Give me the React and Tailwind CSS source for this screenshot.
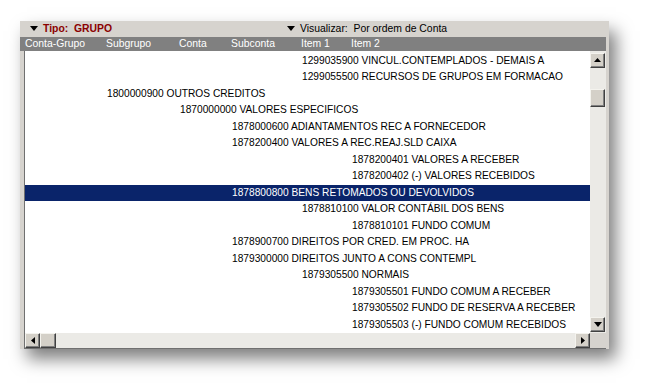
import React from "react";

const rows = [
  [302, "1299035900 VINCUL.CONTEMPLADOS - DEMAIS A"],
  [302, "1299055500 RECURSOS DE GRUPOS EM FORMACAO"],
  [107, "1800000900 OUTROS CREDITOS"],
  [180, "1870000000 VALORES ESPECIFICOS"],
  [232, "1878000600 ADIANTAMENTOS REC A FORNECEDOR"],
  [232, "1878200400 VALORES A REC.REAJ.SLD CAIXA"],
  [352, "1878200401 VALORES A RECEBER"],
  [352, "1878200402 (-) VALORES RECEBIDOS"],
  [232, "1878800800 BENS RETOMADOS OU DEVOLVIDOS", true],
  [302, "1878810100 VALOR CONTÁBIL DOS BENS"],
  [352, "1878810101 FUNDO COMUM"],
  [232, "1878900700 DIREITOS POR CRED. EM PROC. HA"],
  [232, "1879300000 DIREITOS JUNTO A CONS CONTEMPL"],
  [302, "1879305500 NORMAIS"],
  [352, "1879305501 FUNDO COMUM A RECEBER"],
  [352, "1879305502 FUNDO DE RESERVA A RECEBER"],
  [352, "1879305503 (-) FUNDO COMUM RECEBIDOS"],
];

const cols = [
  [26, "Conta-Grupo"],
  [107, "Subgrupo"],
  [180, "Conta"],
  [232, "Subconta"],
  [302, "Item 1"],
  [352, "Item 2"],
];

function Tri({ dir, className = "" }) {
  const pts = {
    up: "0,4 3.5,0 7,4",
    down: "0,0 4,5 8,0",
    left: "4,0 0,3.5 4,7",
    right: "0,0 4,3.5 0,7",
  }[dir];
  const w = dir === "up" ? 7 : dir === "down" ? 8 : 4;
  const h = dir === "up" ? 4 : dir === "down" ? 5 : 7;
  return (
    <svg width={w} height={h} viewBox={`0 0 ${w} ${h}`} className={className}>
      <polygon points={pts} fill="#000" />
    </svg>
  );
}

function Btn({ children, className = "" }) {
  return (
    <div
      className={`flex items-center justify-center bg-[#d4d0c8] border-t border-l border-t-[#f4f3ee] border-l-[#f4f3ee] shadow-[inset_-1px_-1px_0_#808080] border-r border-b border-r-[#404040] border-b-[#404040] ${className}`}
    >
      {children}
    </div>
  );
}

export default function App() {
  const font = { fontFamily: '"Liberation Sans", Arial, sans-serif' };
  return (
    <div className="w-[652px] h-[392px] bg-white relative" style={font}>
      <div className="absolute left-[20px] top-[21px] w-[589px] h-[328px] bg-[#d6d3ce] shadow-[7px_10px_16px_rgba(0,0,0,0.5)] flex flex-col">
        {/* top row */}
        <div className="h-[16px] flex items-center text-[10.4px] leading-none text-black">
          <div className="flex items-center w-[267px] pl-[10px]">
            <Tri dir="down" className="mr-[5px]" />
            <span className="font-bold text-[#8b0000]">Tipo:&nbsp; GRUPO</span>
          </div>
          <div className="flex items-center">
            <Tri dir="down" className="mr-[5px]" />
            <span>Visualizar:&nbsp; Por ordem de Conta</span>
          </div>
        </div>
        {/* column header */}
        <div className="h-[14px] w-[586px] bg-[#808080] relative text-white text-[10.4px] leading-[14px]">
          {cols.map(([x, t]) => (
            <span key={t} className="absolute top-0" style={{ left: x - 21 }}>
              {t}
            </span>
          ))}
        </div>
        {/* body */}
        <div className="flex-1 flex flex-col ml-[4px] mr-[3px] border-l border-[#707070] border-b border-b-[#707070]">
          <div className="flex flex-1 min-h-0">
            <div className="flex-1 bg-white pt-[2px] overflow-hidden">
              {rows.map(([x, t, sel]) => (
                <div
                  key={t}
                  className={`h-[16.5px] relative text-[10.2px] leading-[16.5px] whitespace-nowrap ${
                    sel ? "bg-[#0a246a] text-white" : "text-black"
                  }`}
                >
                  <span className="absolute top-0" style={{ left: x - 25 }}>
                    {t}
                  </span>
                </div>
              ))}
            </div>
            <div className="w-[16px] bg-[#ebeae6] flex flex-col pt-[2px] pb-[1px]">
              <Btn className="w-[15px] h-[15px]">
                <Tri dir="up" />
              </Btn>
              <div className="h-[21px]" />
              <Btn className="w-[15px] h-[18px]" />
              <div className="flex-1" />
              <Btn className="w-[15px] h-[15px]">
                <Tri dir="down" />
              </Btn>
            </div>
          </div>
          <div className="h-[15px] flex">
            <div className="flex-1 flex bg-[#ebeae6]">
              <Btn className="w-[15px] h-[15px]">
                <Tri dir="left" />
              </Btn>
              <Btn className="w-[16px] h-[15px]" />
              <div className="flex-1" />
              <Btn className="w-[15px] h-[15px]">
                <Tri dir="right" />
              </Btn>
            </div>
            <div className="w-[16px] bg-[#d6d3ce]" />
          </div>
        </div>
      </div>
    </div>
  );
}
